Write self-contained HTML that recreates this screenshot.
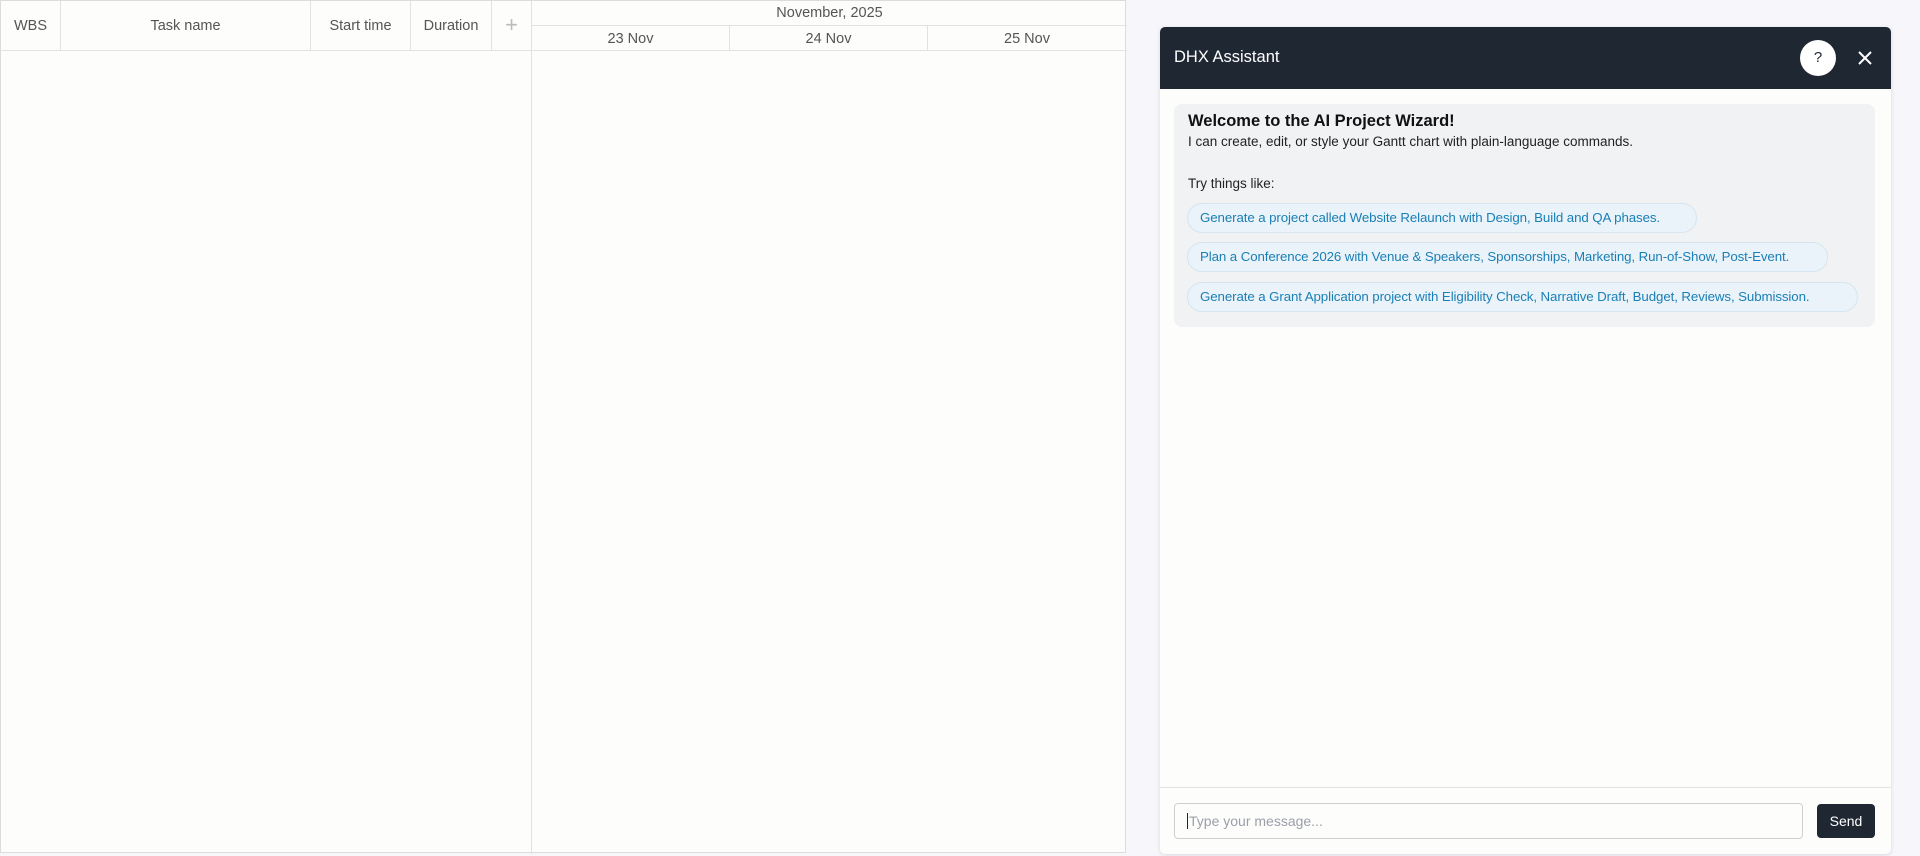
<!DOCTYPE html>
<html><head><meta charset="utf-8"><style>
*{box-sizing:border-box;margin:0;padding:0}
body{width:1920px;height:856px;background:#f6f6fb;font-family:"Liberation Sans",sans-serif;position:relative;overflow:hidden}
.g{position:absolute;left:0;top:0;width:1126px;height:853px;background:#fdfdfb;border:1px solid #dcdcdc}
.l{position:absolute;background:#e2e2e2}
.t{position:absolute;color:#555;font-size:14.5px;text-align:center}
.p{position:absolute;left:1160px;top:27px;width:731px;height:827px;background:#fdfdfc;border-radius:5px;box-shadow:0 1px 4px rgba(0,0,0,.12);overflow:hidden}
.h{height:62px;background:#1f2733;color:#fff;font-size:16.5px;padding:21px 14px}
.w{position:absolute;left:14px;top:77px;width:701px;height:223px;background:#f0f2f3;border-radius:8px;padding:8px 14px}
.c{position:absolute;left:13px;height:30px;border:1px solid #d6e5ef;background:#eaf3fa;border-radius:15px;color:#1a7fb5;font-size:13.3px;line-height:28px;padding:0 12px;white-space:nowrap;letter-spacing:-0.1px}
</style></head><body>
<div class="g">
<div class="l" style="left:0;top:49px;width:1126px;height:1px"></div>
<div class="l" style="left:530px;top:24px;width:596px;height:1px"></div>
<div class="l" style="left:59px;top:0;width:1px;height:49px"></div>
<div class="l" style="left:309px;top:0;width:1px;height:49px"></div>
<div class="l" style="left:409px;top:0;width:1px;height:49px"></div>
<div class="l" style="left:490px;top:0;width:1px;height:49px"></div>
<div class="l" style="left:530px;top:0;width:1px;height:853px"></div>
<div class="l" style="left:728px;top:25px;width:1px;height:24px"></div>
<div class="l" style="left:926px;top:25px;width:1px;height:24px"></div>
<div class="t" style="left:0;width:59px;top:17px">WBS</div>
<div class="t" style="left:60px;width:249px;top:17px">Task name</div>
<div class="t" style="left:310px;width:99px;top:17px">Start time</div>
<div class="t" style="left:410px;width:80px;top:17px">Duration</div>
<div class="t" style="left:491px;width:39px;top:11px;font-size:22px;color:#bbb">+</div>
<div class="t" style="left:531px;width:595px;top:4px">November, 2025</div>
<div class="t" style="left:531px;width:197px;top:30px">23 Nov</div>
<div class="t" style="left:729px;width:197px;top:30px">24 Nov</div>
<div class="t" style="left:927px;width:198px;top:30px">25 Nov</div>
</div>
<div class="p">
<div class="h">DHX Assistant
<div style="position:absolute;left:640px;top:13px;width:36px;height:36px;border-radius:50%;background:#fff;color:#1f2733;font-size:15px;text-align:center;line-height:36px">?</div>
<svg style="position:absolute;left:698px;top:24px" width="14" height="14" viewBox="0 0 14 14"><path d="M1 1L13 13M13 1L1 13" stroke="#fff" stroke-width="2"/></svg>
</div>
<div class="w">
<div style="font-size:16.5px;font-weight:bold;color:#111">Welcome to the AI Project Wizard!</div>
<div style="font-size:13.5px;color:#222;margin-top:3px">I can create, edit, or style your Gantt chart with plain-language commands.</div>
<div style="font-size:13.5px;color:#222;position:absolute;top:72px">Try things like:</div>
<div class="c" style="top:99px;width:510px">Generate a project called Website Relaunch with Design, Build and QA phases.</div>
<div class="c" style="top:138px;width:641px">Plan a Conference 2026 with Venue &amp; Speakers, Sponsorships, Marketing, Run-of-Show, Post-Event.</div>
<div class="c" style="top:178px;width:671px">Generate a Grant Application project with Eligibility Check, Narrative Draft, Budget, Reviews, Submission.</div>
</div>
<div style="position:absolute;left:0;top:760px;width:731px;height:1px;background:#e2e2e2"></div>
<div style="position:absolute;left:14px;top:776px;width:629px;height:36px;border:1px solid #d0d0d0;border-radius:4px;font-size:14px;color:#9a9fa8;padding:9px 12px"><span style="border-left:1px solid #222;padding-left:1px">Type your message...</span></div>
<div style="position:absolute;left:657px;top:777px;width:58px;height:34px;background:#1f2733;border-radius:4px;color:#fff;font-size:14px;text-align:center;line-height:34px">Send</div>
</div>
</body></html>
